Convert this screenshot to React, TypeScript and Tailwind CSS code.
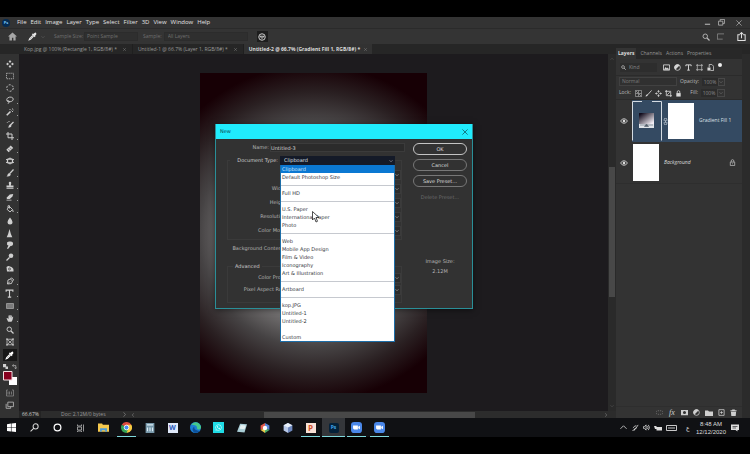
import { ReactNode } from 'react'
import { FaWhatsapp } from 'react-icons/fa'

const MENUS = ['File', 'Edit', 'Image', 'Layer', 'Type', 'Select', 'Filter', '3D', 'View', 'Window', 'Help']

const DOCS = [
  { name: 'Kop.jpg @ 100% (Rectangle 1, RGB/8#) *', active: false },
  { name: 'Untitled-1 @ 66.7% (Layer 1, RGB/8#) *', active: false },
  { name: 'Untitled-2 @ 66.7% (Gradient Fill 1, RGB/8#) *', active: true },
]

// null draws a separator
const DOC_TYPES: (string | null)[] = [
  'Clipboard', 'Default Photoshop Size', null,
  'Full HD', null,
  'U.S. Paper', 'International Paper', 'Photo', null,
  'Web', 'Mobile App Design', 'Film & Video', 'Iconography', 'Art & Illustration', null,
  'Artboard', null,
  'kop.JPG', 'Untitled-1', 'Untitled-2', '',
  'Custom',
]

interface IconProps {
  children: ReactNode
  className?: string
}

function Icon({ children, className = 'size-2' }: IconProps) {
  return (
    <svg
      viewBox="0 0 16 16"
      className={`shrink-0 ${className}`}
      fill="none"
      stroke="currentColor"
      strokeWidth="1.8"
      aria-hidden="true"
    >
      {children}
    </svg>
  )
}

const fill = { fill: 'currentColor', stroke: 'none' }

const eyedropper = (
  <>
    <path {...fill} d="M9 3.5 11 2q3-2 3.600 0 1 1.600-.8 3.500L12.500 7l.8.900-1.300 1.300L6.800 4.100 8.100 2.700z" />
    <path d="M8.500 6 3 11.500 2 14l2.500-1L10 7.500" />
  </>
)

const magnifier = (
  <>
    <circle cx="6.500" cy="6.500" r="4.500" />
    <path d="m10 10 5 5" strokeWidth="2.400" />
  </>
)

const lock = (
  <>
    <path {...fill} d="M3 7h10v8H3z" />
    <path d="M5 7V4.500a3 3 0 0 1 6 0V7" />
  </>
)

const TOOLS: { name: string; art: ReactNode; corner?: boolean }[] = [
  { name: 'Move', art: <><path d="M8 3v3m0 4v3M3 8h3m4 0h3" /><path {...fill} d="m8 0 3 4H5zm0 16 3-4H5zM0 8l4-3v6zm16 0-4-3v6z" /></> },
  { name: 'Marquee', art: <path d="M1 2.500h14v11H1z" strokeDasharray="2.500 1.500" strokeWidth="1.400" /> },
  { name: 'Elliptical marquee', art: <circle cx="8" cy="8" r="6.500" strokeDasharray="4 2.800" /> },
  { name: 'Lasso', corner: true, art: <path d="M5 12C1 10 0 6 4 3.500S14 2 14.500 6 9 12.500 5 11s-3-2 0-1.500 1 4-1 6" /> },
  { name: 'Magic wand', corner: true, art: <><path d="M1.500 14.500 9 7" strokeWidth="3.200" /><path d="M11 5l1-1M13 1v2m0 3v2m-4-5H7m8 1h1" /></> },
  { name: 'Quick selection', art: <><path d="m15 4-6 6" strokeWidth="2.600" /><path {...fill} d="M9.500 8.500q3 4-1 6-2 1-5 .5 2-1 2-3 1-3 4-3.500" /><path d="M7 3Q2 3 2 8" strokeDasharray="2 2" /></> },
  { name: 'Crop', corner: true, art: <path d="M4 0v11.500h12M0 4h12v12" strokeWidth="2" /> },
  { name: 'Healing brush', corner: true, art: <><path d="M3 12 12 3.500" strokeWidth="7" /><path d="m4.500 8 4 4m-1-7 4 4" stroke="#323232" strokeWidth="1" /></> },
  { name: 'Patch', art: <><rect x="3" y="4" width="10" height="8" rx="2" strokeWidth="2.600" /><path d="M0 5h3M0 11h3m10-6h3m-3 6h3M8 1v3m0 8v3" /></> },
  { name: 'Brush', corner: true, art: <><path d="m15 1-7 7.500" strokeWidth="2.400" /><path {...fill} d="M7.500 8q3 2 1.500 4.500-2 3-8 2.500 2-1 2-3.500 1-3.500 4.500-3.500" /></> },
  { name: 'Clone stamp', corner: true, art: <path {...fill} d="M5.500 4a2.500 2.500 0 1 1 5 0L9.500 9H15v4H1V9h5.500zM1 14h14v1.500H1z" /> },
  { name: 'Eraser', corner: true, art: <path {...fill} d="m7.500 3 7-1L13 7l-5.500 5H2L1 9.500zM1 13.500h10V15H1z" /> },
  { name: 'Paint bucket', corner: true, art: <><path d="m7 3 6 6-5 5-6-5.500zM4 6V1.500h3V7" /><path {...fill} d="M13 9q4 4 1 5-2-1-1-5" /></> },
  { name: 'Blur', art: <path {...fill} d="M8 1q5 6 5 9a5 5 0 0 1-10 0q0-3 5-9" /> },
  { name: 'Sharpen', art: <path {...fill} d="M8 0q2 9 5 14.500H3Q6 9 8 0" /> },
  { name: 'Smudge', art: <path {...fill} d="M2 3q3-3 7-2 6 0 5 6-1 3-5 3l-5 6-2-1 3-6Q1 8 2 3" /> },
  { name: 'Dodge', art: <><circle {...fill} cx="10" cy="5.500" r="4.500" /><path d="m7 9-6 6" strokeWidth="2.400" /></> },
  { name: 'Sponge', art: <><path {...fill} d="M1 4q4-3 7-1 7 2 7 7v3H2z" /><circle cx="7" cy="8" r="2" stroke="#323232" strokeWidth="1.400" /></> },
  { name: 'Pen', corner: true, art: <path d="m3 14 1-8 5-2 4 4-2 5zM3 14l5-5M9 4l2-2.500L15.500 6 13 8" /> },
  { name: 'Horizontal type', corner: true, art: <path d="M2 5V2h12v3M8 2v12.500m-3 0h6" strokeWidth="2" /> },
  { name: 'Rectangle', corner: true, art: <path d="M1 3h14v10H1z" fill="#7b7b7b" stroke="#9a9a9a" /> },
  { name: 'Hand', corner: true, art: <path {...fill} d="M4 15 1 8.500l1.500-.7L5 10V3h1.800v5l.5-6h1.800v6l.8-5h1.700v6l1.200-3.500h1.700L13 12l-2 3.500H5z" /> },
  { name: 'Zoom', art: magnifier },
  { name: 'Frame', art: <path d="M2 0v16M14 0v16M0 2.500h16M0 13.500h16M2 2.500l12 11m0-11-12 11" strokeWidth="1.500" /> },
]

function Toolbar() {
  return (
    <aside className="flex w-[19px] shrink-0 flex-col items-center bg-[#323232] pt-1 text-[#cfcfcf]">
      <div className="flex h-[290px] flex-col justify-between">
        {TOOLS.map((tool) => (
          <button key={tool.name} aria-label={tool.name} className="relative flex h-3 w-4 items-center justify-center">
            <Icon className={tool.name === 'Sharpen' || tool.name === 'Horizontal type' ? 'size-[9px]' : 'size-2'}>{tool.art}</Icon>
            {tool.corner && <span className="absolute right-0 bottom-[2px] size-px bg-[#9a9a9a]" />}
          </button>
        ))}
      </div>
      <button aria-label="Eyedropper" className="mt-px flex h-3 w-[14px] items-center justify-center bg-[#171717] text-white">
        <Icon className="size-[9px]">{eyedropper}</Icon>
      </button>
      <div className="flex h-[10px] items-center gap-1">
        <Icon className="size-[5px]"><path {...fill} d="M0 0h10v10H0zM8 8h8v8H8z" /></Icon>
        <Icon className="size-[5px]"><path d="M2 5h10v9M5 1 1 5l4 4m3 3 4 3 3-4" strokeWidth="2" /></Icon>
      </div>
      <svg viewBox="0 0 14 14" className="h-[14px] w-[14px] shrink-0" aria-label="Foreground and background colour">
        <path d="M6 6h8v8H6z" fill="#fff" />
        <path d="M.5.5h8.500v8.500H.5z" fill="#87001f" stroke="#f3dfe3" />
      </svg>
      <button aria-label="Quick mask" className="mt-[2px] flex h-3 items-center text-[#8f8f8f]">
        <Icon><path d="M1 2v12h14V2M4 5v6m3-6v6m4-6v6M1 2h3m8 0h3" strokeWidth="1.400" /></Icon>
      </button>
      <button aria-label="Screen mode" className="flex h-3 items-center text-[#b5b5b5]">
        <Icon className="size-[9px]"><path d="M5 2h10v8H5zM2 5v8h8v-3" strokeWidth="1.500" /></Icon>
      </button>
    </aside>
  )
}

function MenuBar() {
  return (
    <header className="flex h-[11px] items-center bg-[#333] pr-2 text-[6px] leading-[11px] text-[#e2e2e2]">
      <span className="ml-[2px] flex size-2 items-center justify-center rounded-sm bg-[#052b52] text-[4px] font-bold text-[#7ac4f5]">Ps</span>
      <nav className="ml-[7px] flex flex-1 gap-1">
        {MENUS.map((m) => (
          <button key={m}>{m}</button>
        ))}
      </nav>
      <div className="flex items-center gap-[7px] text-[#b9b9b9]">
        <button aria-label="Minimize"><Icon className="size-[7px]"><path d="M2 12h12" strokeWidth="2.400" /></Icon></button>
        <button aria-label="Restore"><Icon className="size-[7px]"><path d="M1 5h10v9H1zM5 5V1h10v9h-4" /></Icon></button>
        <button aria-label="Close" className="ml-1"><Icon className="size-[6px]"><path d="m1 1 14 14m0-14L1 15" /></Icon></button>
      </div>
    </header>
  )
}

function OptionsBar() {
  return (
    <div className="flex h-4 items-center border-t border-[#2b2b2b] bg-[#343434] px-2 text-[5px] text-[#707070]">
      <button aria-label="Home" className="text-[#a6a6a6]">
        <Icon className="size-[9px]"><path {...fill} d="M8 1 0 8h2.500v7H7v-5h2.500v5h4V8H16z" /></Icon>
      </button>
      <button aria-label="Eyedropper tool" className="ml-[11px] text-[#e6e6e6]"><Icon className="size-[9px]">{eyedropper}</Icon></button>
      <Icon className="ml-1 size-1"><path d="m2 5 6 6 6-6" /></Icon>
      <label htmlFor="sample-size" className="ml-[9px]">Sample Size:</label>
      <select id="sample-size" className="ml-px h-[9px] w-[54px] appearance-none border border-[#2c2c2c] bg-[#2f2f2f] px-[2px] leading-[7px]">
        <option>Point Sample</option>
      </select>
      <label htmlFor="sample" className="ml-[5px]">Sample:</label>
      <select id="sample" className="ml-[2px] h-[9px] w-[84px] appearance-none border border-[#2c2c2c] bg-[#2f2f2f] px-[3px] leading-[7px]">
        <option>All Layers</option>
      </select>
      <button aria-label="Show sampling ring" className="ml-[9px] flex size-[11px] items-center justify-center bg-[#1d1d1d] text-[#e0e0e0]">
        <Icon><circle cx="8" cy="8" r="6.500" /><path d="M4 6.500h8L8 11z" /></Icon>
      </button>
      <div className="flex flex-1 items-center justify-end gap-[7px] text-[#b9b9b9]">
        <button aria-label="Search"><Icon>{magnifier}</Icon></button>
        <button aria-label="Workspace" className="text-[#8b8b8b]"><Icon className="size-[7px]"><path d="M1 15V2h15M1 14h12" /></Icon></button>
        <button aria-label="Share" className="ml-[6px] -mr-1 text-[#e0e0e0]"><Icon className="size-[9px]"><path d="M5 5H1.500v10h13V5H11M8 11V1M5 4l3-3 3 3" /></Icon></button>
      </div>
    </div>
  )
}

function DocTabs() {
  return (
    <div className="flex h-[10px] items-stretch bg-[#262626] pl-[19px] text-[5px] leading-[10px]">
      {DOCS.map((doc) => (
        <div
          key={doc.name}
          className={
            doc.active
              ? 'flex items-center gap-1 bg-[#323232] px-[5px] font-bold text-[#dcdcdc]'
              : 'flex items-center gap-[6px] border-r border-[#1f1f1f] pr-[6px] pl-[5px] text-[#9a9a9a]'
          }
        >
          <button>{doc.name}</button>
          <button aria-label="Close document" className="text-[#777]">
            <Icon className="size-[3px]"><path d="m1 1 14 14m0-14L1 15" strokeWidth="3" /></Icon>
          </button>
        </div>
      ))}
    </div>
  )
}

function Canvas() {
  return (
    <main className="flex min-w-0 flex-1 flex-col bg-[#1d1b1e]">
      <div className="flex flex-1">
        <div className="flex flex-1 items-center justify-center">
          <div className="h-[320px] w-[227px] bg-[radial-gradient(circle_168px_at_center,#d0d0d0_0%,#868484_45%,#464344_68%,#2a2022_84%,#170005_100%)]" />
        </div>
        <div className="flex w-2 flex-col items-center bg-[#2a2a2a] py-[3px] text-[#666]">
          <Icon className="size-1"><path d="m2 11 6-6 6 6" /></Icon>
          <div className="mt-[106px] h-[130px] w-[6px] bg-[#484848]" />
          <Icon className="mt-auto size-1"><path d="m2 5 6 6 6-6" /></Icon>
        </div>
      </div>
      <div className="flex h-[7px] items-center bg-[#2c2c2c] text-[5px] leading-[7px] text-[#9a9a9a]">
        <span className="w-[22px] bg-[#242424] pl-[3px] text-[#d0d0d0]">66.67%</span>
        <span className="ml-5">Doc: 2.12M/0 bytes</span>
        <Icon className="ml-4 size-[5px]"><path d="m5 1 6 7-6 7" /></Icon>
        <Icon className="ml-1 size-1"><path d="m11 1-6 7 6 7" /></Icon>
        <div className="flex flex-1 justify-center">
          <div className="h-[6px] w-[45%] bg-[#484848]" />
        </div>
        <Icon className="mr-2 size-1"><path d="m5 1 6 7-6 7" /></Icon>
      </div>
    </main>
  )
}

function Eye() {
  return (
    <Icon>
      <path d="M1 8q7-9 14 0-7 9-14 0z" />
      <circle {...fill} cx="8" cy="8" r="2.600" />
    </Icon>
  )
}

function PercentBox({ label, id }: { label: string; id: string }) {
  return (
    <div className="flex w-[45px] items-center justify-end text-[#8b8b8b]">
      <label htmlFor={id} className="flex-1 text-right text-[#bcbcbc]">{label}</label>
      <input id={id} defaultValue="100%" className="ml-[3px] h-2 w-4 bg-[#2c2c2c] px-px text-center" />
      <button aria-label={`${label} slider`} className="flex size-2 items-center justify-center border border-[#484848]">
        <Icon className="size-1"><path d="m2 5 6 6 6-6" /></Icon>
      </button>
    </div>
  )
}

function LayersPanel() {
  return (
    <section className="flex w-[134px] shrink-0 flex-col bg-[#2b2b2b] pr-2 text-[5px] text-[#b9b9b9]">
      <div className="-mt-[6px] flex h-[11px] items-center gap-[3px] bg-[#282828] text-[#969696]">
        <button className="h-full bg-[#343434] px-[2px] font-bold text-[#dcdcdc]">Layers</button>
        <button className="ml-px">Channels</button>
        <button className="ml-px">Actions</button>
        <button className="ml-px">Properties</button>
      </div>
      <div className="flex flex-1 flex-col bg-[#333]">
        <div className="flex h-4 items-center pl-1">
          <label className="flex h-[9px] w-[37px] items-center gap-[3px] bg-[#2d2d2d] pl-px text-[#8b8b8b]">
            <Icon className="size-[5px] text-[#ddd]">{magnifier}</Icon>
            <select aria-label="Filter kind" className="h-[9px] appearance-none leading-[9px]"><option>Kind</option></select>
          </label>
          <div className="ml-[6px] flex items-center gap-1 text-[#d6d6d6]">
            <Icon className="size-[7px]"><path d="M1 2h14v12H1z" strokeWidth="2" /><path {...fill} d="m2 13 4-6 3 3 2-2 3 5z" /></Icon>
            <Icon className="size-[7px]"><circle cx="8" cy="8" r="6.500" /><path {...fill} d="M13 3 3 13A7 7 0 0 1 13 3" /></Icon>
            <Icon className="size-[7px]"><path d="M2 5V2h12v3M8 2v12M5 14h6" strokeWidth="2.200" /></Icon>
            <Icon className="size-[7px]"><path d="M3 3h10v10H3zM0 3h3V0m10 0v3h3M0 13h3v3m10 0v-3h3" strokeWidth="1.400" /></Icon>
            <Icon className="size-[7px]"><path d="M5 7V1h6l4 4v10H8" /><path {...fill} d="M1 8h7v7H1z" /></Icon>
            <span className="mb-1 size-1 rounded-full bg-[#eee]" />
          </div>
        </div>
        <div className="flex h-3 items-center justify-between border-t border-[#2b2b2b] pr-[17px] pl-[3px]">
          <select aria-label="Blend mode" className="h-[9px] w-[58px] appearance-none border border-[#414141] bg-[#303030] px-[2px] leading-[7px] text-[#7b7b7b]">
            <option>Normal</option>
          </select>
          <PercentBox id="opacity" label="Opacity:" />
        </div>
        <div className="flex h-3 items-center pr-[17px] pl-[3px]">
          <span>Lock:</span>
          <div className="ml-1 flex flex-1 items-center gap-[3px] text-[#dadada]">
            <Icon className="size-[7px] text-[#999]"><path d="M1 1h14v14H1zM1 8h14M8 1v14M1 1l14 14" /></Icon>
            <Icon className="size-[7px]"><path d="m15 1-9 10" strokeWidth="2" /><path {...fill} d="M6 9q2 5-5 6 1-5 5-6" /></Icon>
            <Icon className="size-[7px]">{TOOLS[0].art}</Icon>
            <Icon className="size-[7px]"><path d="M3 0v13h13M0 3h13v13M5 11l6-6" /></Icon>
            <Icon className="size-[7px]">{lock}</Icon>
          </div>
          <PercentBox id="fill" label="Fill:" />
        </div>
        <ul className="border-t border-[#2b2b2b]">
          <li className="flex h-[42px] items-center">
            <button aria-label="Toggle Gradient Fill 1" className="flex w-4 justify-center text-[#ddd]"><Eye /></button>
            <div className="flex h-full flex-1 items-center bg-[#344a62]">
              <svg viewBox="0 0 30 40" className="h-10 w-[30px]" aria-hidden="true">
                <defs>
                  <linearGradient id="thumb" x1="0" y1="0" x2="1" y2="1">
                    <stop offset="0.1" stopColor="#120c1c" />
                    <stop offset="0.9" stopColor="#f1ecf3" />
                  </linearGradient>
                </defs>
                <path d="M10 .5H.5v39M20 .5h9.500v39" fill="none" stroke="#d4dbe2" />
                <path d="M7 12h15v11H7z" fill="url(#thumb)" />
                <path d="M7 23h15v4H7z" fill="#dfe3e8" />
                <path d="M8 24h13M14.500 23l2 2.500h-4z" stroke="#55606b" fill="#55606b" strokeWidth=".6" />
              </svg>
              <Icon className="size-[7px] text-[#c7d0da]"><path d="M5 7V3.500a3 3 0 0 1 6 0V7M5 9v3.500a3 3 0 0 0 6 0V9M8 5v6" /></Icon>
              <div className="-ml-px h-[36px] w-[26px] bg-white" />
              <span className="ml-[5px] text-[#dbe0e5]">Gradient Fill 1</span>
            </div>
          </li>
          <li className="flex h-[42px] items-center border-b border-[#2e2e2e]">
            <button aria-label="Toggle Background" className="flex w-4 justify-center text-[#ddd]"><Eye /></button>
            <div className="ml-px h-[37px] w-[26px] bg-white" />
            <span className="ml-[5px] flex-1 text-[#dcdcdc] italic">Background</span>
            <Icon className="mr-[6px] size-[7px]"><path d="M3 7h10v8H3zM5 7V4.500a3 3 0 0 1 6 0V7M8 10v2" /></Icon>
          </li>
        </ul>
        <div className="mt-auto flex h-3 items-center justify-end gap-[5px] border-t border-[#2e2e2e] pr-[5px] text-[#cfcfcf]">
          <Icon className="size-[7px] text-[#777]"><path d="M7 4H4a3 3 0 0 0 0 8h3m2-8h3a3 3 0 0 1 0 8H9" strokeDasharray="3 2" /></Icon>
          <span className="w-2 text-center font-['Liberation_Serif',serif] text-[8px] leading-none italic">fx</span>
          <Icon className="size-[7px]"><path {...fill} fillRule="evenodd" d="M0 2h16v12H0zm8 2.500a3.500 3.500 0 1 0 0 7 3.500 3.500 0 0 0 0-7" /></Icon>
          <Icon className="size-[7px]"><circle cx="8" cy="8" r="6.500" /><path {...fill} d="M13 3 3 13A7 7 0 0 1 13 3" /></Icon>
          <Icon><path {...fill} d="M0 3h6l2 2h8v9H0z" /></Icon>
          <Icon className="size-[7px]"><path d="M2 1.500h12v13H2zM8 5v6M5 8h6" /></Icon>
          <Icon className="size-[7px]"><path {...fill} d="M1 3h4V1h6v2h4v2H1zm1 3h12l-1 10H3z" /></Icon>
        </div>
      </div>
    </section>
  )
}

function FieldRow({ id, label, className }: { id: string; label: string; className: string }) {
  return (
    <div className={`flex items-center ${className}`}>
      <label htmlFor={id} className="shrink-0 text-right whitespace-nowrap">{label}</label>
      <div className="ml-1 flex h-[10px] flex-1 items-center border border-[#3b3b3b] bg-[#2b2b2b] pr-px">
        <select id={id} aria-label={label || id} className="min-w-0 flex-1 appearance-none px-1 leading-[8px]" />
        <Icon className="size-1"><path d="m2 5 6 6 6-6" strokeWidth="2.400" /></Icon>
      </div>
    </div>
  )
}

const ROW = 'h-[14px] *:first:w-[60px]'

function NewDialog() {
  return (
    <div
      role="dialog"
      aria-label="New"
      className="absolute top-[124px] left-[215px] w-[258px] border border-t-0 border-[#2a8f98] bg-[#323232] font-['DejaVu_Sans',sans-serif] text-[5px] text-[#b3b3b3] shadow-[0_1px_6px_rgba(0,0,0,0.5)]"
    >
      <div className="flex h-[15px] items-center justify-between bg-[#20ecfd] px-1 text-[#0b4850]">
        <h1>New</h1>
        <button aria-label="Close dialog"><Icon className="size-[6px]"><path d="m1 1 14 14m0-14L1 15" /></Icon></button>
      </div>
      <div className="flex gap-2 pt-1 pr-[5px] pb-[5px]">
        <form className="min-w-0 flex-1">
          <div className="flex h-[9px] items-center">
            <label htmlFor="doc-name" className="w-[53px] text-right">Name:</label>
            <input id="doc-name" defaultValue="Untitled-3" className="ml-px h-[9px] min-w-0 flex-1 border border-[#3b3b3b] bg-[#2b2b2b] text-[#d5d5d5]" />
          </div>
          <fieldset className="mt-1 mr-[3px] ml-[11px] min-w-0 border border-[#3a3a3a] pb-px">
            <legend className="ml-[2px] flex h-[9px] items-center bg-[#323232]">
              <label htmlFor="doc-type" className="w-[48px] text-right whitespace-nowrap text-[#cfcfcf]">Document Type:</label>
              <div className="relative ml-[2px] flex h-[9px] w-[115px] items-center bg-[#141a28] text-[#dfe2e8]">
                <select id="doc-type" className="h-[9px] flex-1 appearance-none pl-1 leading-[9px]">
                  <option>Clipboard</option>
                </select>
                <Icon className="mr-[2px] size-1"><path d="m2 5 6 6 6-6" /></Icon>
                <ul role="listbox" aria-label="Document types" className="absolute top-full left-0 z-10 w-full border border-t-0 border-[#1d6ea8] bg-white text-[#33353b]">
                  {DOC_TYPES.map((type, i) =>
                    type ? (
                      <li
                        key={i}
                        role="option"
                        aria-selected={i === 0}
                        className={i === 0 ? 'h-2 bg-[#0b78d2] pl-px leading-2 text-[#cfe6fa]' : 'h-2 pl-px leading-2'}
                      >
                        {type}
                      </li>
                    ) : (
                      <li key={i} role="separator" className="flex h-2 items-center">
                        {type === null && <span className="h-px w-full bg-[#c6c9cf]" />}
                      </li>
                    ),
                  )}
                </ul>
                <svg viewBox="0 0 8 12" className="absolute top-[55px] left-8 z-20 h-3 w-2" aria-hidden="true">
                  <path d="M.5.5v8.500l2-2L4 11l1.500-.7L4 6.500h3z" fill="#fff" stroke="#222" strokeWidth=".8" />
                </svg>
              </div>
            </legend>
            <div className="pt-[3px]">
              <FieldRow id="size" label="" className={ROW} />
              <FieldRow id="width" label="Width:" className={ROW} />
              <FieldRow id="height" label="Height:" className={ROW} />
              <FieldRow id="resolution" label="Resolution:" className={ROW} />
              <FieldRow id="mode" label="Color Mode:" className={ROW} />
            </div>
          </fieldset>
          <div className="mt-[2px] mr-[10px] ml-3">
            <FieldRow id="contents" label="Background Contents:" className={ROW} />
          </div>
          <fieldset className="mt-1 mr-[3px] ml-[11px] min-w-0 border border-[#3a3a3a] pb-[6px]">
            <legend className="ml-[5px] h-3 px-[2px] leading-3 text-[#cfcfcf]">Advanced</legend>
            <FieldRow id="profile" label="Color Profile:" className="h-3 *:first:w-[62px]" />
            <FieldRow id="aspect" label="Pixel Aspect Ratio:" className="h-3 *:first:w-[62px]" />
          </fieldset>
        </form>
        <div className="flex w-[54px] flex-col items-stretch gap-1 text-[#dcdcdc] *:leading-[10px]">
          <button className="h-3 rounded-full border border-[#c4c4c4]">OK</button>
          <button className="h-3 rounded-full border border-[#777]">Cancel</button>
          <button className="h-3 rounded-full border border-[#777]">Save Preset...</button>
          <button disabled className="h-3 text-[#6c6c6c]">Delete Preset...</button>
          <p className="mt-[49px] text-center text-[#b3b3b3]">Image Size:<br />2.12M</p>
        </div>
      </div>
    </div>
  )
}

const APPS: { name: string; open?: boolean; active?: boolean; art: ReactNode }[] = [
  { name: 'Start', art: <Icon className="size-[9px] text-white"><path {...fill} d="M0 2l7-1v6.500H0zm8-1 8-1v7.500H8zM0 8.500h7V15l-7-1zm8 0h8V16l-8-1z" /></Icon> },
  { name: 'Search', art: <Icon className="size-[9px] text-[#d8d8d8]"><circle cx="10" cy="6" r="4.500" /><path d="m7 9-6 6" /></Icon> },
  { name: 'Cortana', art: <Icon className="size-[9px] text-white"><circle cx="8" cy="8" r="6" strokeWidth="2.200" /></Icon> },
  { name: 'Task View', art: <Icon className="size-2 text-[#a5a5a5]"><path d="M1 1v3h8V1M1 6h8v6H1zM1 16v-2h8v2M13 1v14" /></Icon> },
  { name: 'File Explorer', art: <Icon className="size-[11px]"><path {...fill} fill="#f5c94e" d="M0 2h6l1 2h9v10H0z" /><path {...fill} fill="#4c9bd8" d="M3 9h10v5h-2.500v-2h-5v2H3z" /></Icon> },
  { name: 'Chrome', open: true, art: (
    <Icon className="size-[11px]">
      <path {...fill} fill="#dd4b3e" d="M8 8 1.100 4A8 8 0 0 1 15 4z" />
      <path {...fill} fill="#f7cc43" d="M8 8V4h7a8 8 0 0 1-7 12z" />
      <path {...fill} fill="#35a355" d="M8 8l2 3-2 5A8 8 0 0 1 1.100 4z" />
      <circle cx="8" cy="8" r="3.400" fill="#4a8af4" stroke="#fff" strokeWidth="1.200" />
    </Icon>
  ) },
  { name: 'Calculator', art: <Icon className="size-[10px]"><path {...fill} fill="#7798aa" d="M1 0h14v16H1z" /><path d="M3 3h10M4 7v6m4-6v6m4-6v6" stroke="#dcecf4" /></Icon> },
  { name: 'Word', art: <span className="flex size-[10px] items-center justify-center bg-[#dfe9fa] text-[7px] leading-none font-bold text-[#2858b8]">W</span> },
  { name: 'Edge', art: <Icon className="size-[11px]"><circle {...fill} fill="#1b7fd4" cx="8" cy="8" r="8" /><path {...fill} fill="#45c98b" d="M2 4q5-6 11-2 5 5 2 8-4 2-5-1 1-5-8-5" /><path {...fill} fill="#0d4f98" d="M6 7q0 6 8 6-5 5-9 1-3-4 1-7" /></Icon> },
  { name: 'WhatsApp', art: <span className="flex size-[11px] items-center justify-center bg-[#1fdce6] text-[#e9fffc]"><FaWhatsapp size={7} /></span> },
  { name: 'Notepad', art: <Icon className="size-[10px]"><path {...fill} fill="#a9cdd6" d="m5 1 11 1-4 13-12-1z" /><path {...fill} fill="#e4f0f2" d="m6 3 8 1-2 6-8-1z" /></Icon> },
  { name: 'Paint', art: <Icon className="size-[10px]"><path {...fill} fill="#e25b4d" d="M8 0 1 4v7l7-3z" /><path {...fill} fill="#e7c84a" d="m1 11 7 5V8z" /><path {...fill} fill="#5a86d8" d="m8 0 7 4v7L8 8z" /><path {...fill} fill="#4cae6a" d="m15 11-7 5V8z" /><circle {...fill} fill="#fff" cx="8" cy="8" r="3.500" /></Icon> },
  { name: 'VirtualBox', art: <Icon className="size-[10px]"><path {...fill} fill="#b7c8e8" d="M8 0 1 3.500v8.500L8 16z" /><path {...fill} fill="#6e88bd" d="m8 0 7 3.500v8.500L8 16z" /><path {...fill} fill="#e9f0fa" d="m8 0 7 3.500L8 7 1 3.500z" /></Icon> },
  { name: 'PowerPoint', open: true, art: <span className="flex size-[10px] items-center justify-center bg-[#f8e1d6] text-[8px] leading-none font-bold text-[#d2502a]">P</span> },
  { name: 'Photoshop', open: true, active: true, art: <span className="flex size-[10px] items-center justify-center rounded-xs bg-[#04213a] text-[5px] leading-none font-bold text-[#42a5ec]">Ps</span> },
  { name: 'Zoom', open: true, art: <Icon className="size-[11px]"><rect {...fill} fill="#4a87e8" width="16" height="16" rx="4.500" /><path {...fill} fill="#fff" d="M3 5h7v6H4.500L3 9.500zm7.500 2L13 5.500v5L10.500 9z" /></Icon> },
  { name: 'Zoom Meeting', open: true, art: <Icon className="size-[11px]"><rect {...fill} fill="#4a87e8" width="16" height="16" rx="4.500" /><path {...fill} fill="#fff" d="M3 5h7v6H4.500L3 9.500zm7.500 2L13 5.500v5L10.500 9z" /></Icon> },
]

function Taskbar() {
  return (
    <footer className="flex h-[19px] items-stretch justify-between bg-[#101114]">
      <div className="flex">
        {APPS.map((app) => (
          <button
            key={app.name}
            aria-label={app.name}
            className={`relative flex w-[23px] items-center justify-center ${app.active ? 'bg-[#34363a]' : ''}`}
          >
            {app.art}
            {app.open && <span className={`absolute bottom-0 h-px bg-[#7fd9dd] ${app.active ? 'inset-x-0' : 'inset-x-[2px]'}`} />}
          </button>
        ))}
      </div>
      <div className="flex items-center pr-[11px] text-[#dedede]">
        <Icon className="size-[7px]"><path d="m1 11 7-7 7 7" /></Icon>
        <Icon className="ml-[5px] size-[7px]"><path d="M1 15q7 0 13-13M2 9q5-6 8-5M5 15q0-6 5-6" /></Icon>
        <Icon className="ml-[4px] size-[7px]"><path d="M1 6v4h2l4 4V2L3 6zm9-1q3 3 0 6m2-9q6 6 0 12" /></Icon>
        <Icon className="ml-[4px] size-[8px]"><path {...fill} d="M5 6h11v7H5zM0 4h5v6H2z" /></Icon>
        <svg viewBox="0 0 22 12" className="ml-1 h-[6px] w-[11px]" fill="none" stroke="currentColor" strokeWidth="1.800" aria-hidden="true">
          <path d="M1 1h20v10H1zM4 6h14" strokeLinejoin="round" />
        </svg>
        <span className="ml-[9px] w-[5px] text-[6px] leading-none">ع</span>
        <time className="ml-[5px] text-center font-['Liberation_Sans',sans-serif] text-[6px] leading-[8px]">
          8:48 AM<br />12/12/2020
        </time>
        <button aria-label="Notifications" className="ml-[5px]">
          <Icon><path {...fill} d="M0 1h16v11h-3v3l-4-3H0z" /><path d="M3 5h10M3 8h7" stroke="#101114" strokeWidth="1.200" /></Icon>
        </button>
      </div>
    </footer>
  )
}

export default function App() {
  return (
    <div className="relative flex min-h-screen flex-col bg-black py-[17px] font-['Open_Sans','Noto_Sans',sans-serif]">
      <MenuBar />
      <OptionsBar />
      <DocTabs />
      <div className="flex flex-1">
        <Toolbar />
        <Canvas />
        <LayersPanel />
      </div>
      <Taskbar />
      <NewDialog />
    </div>
  )
}
